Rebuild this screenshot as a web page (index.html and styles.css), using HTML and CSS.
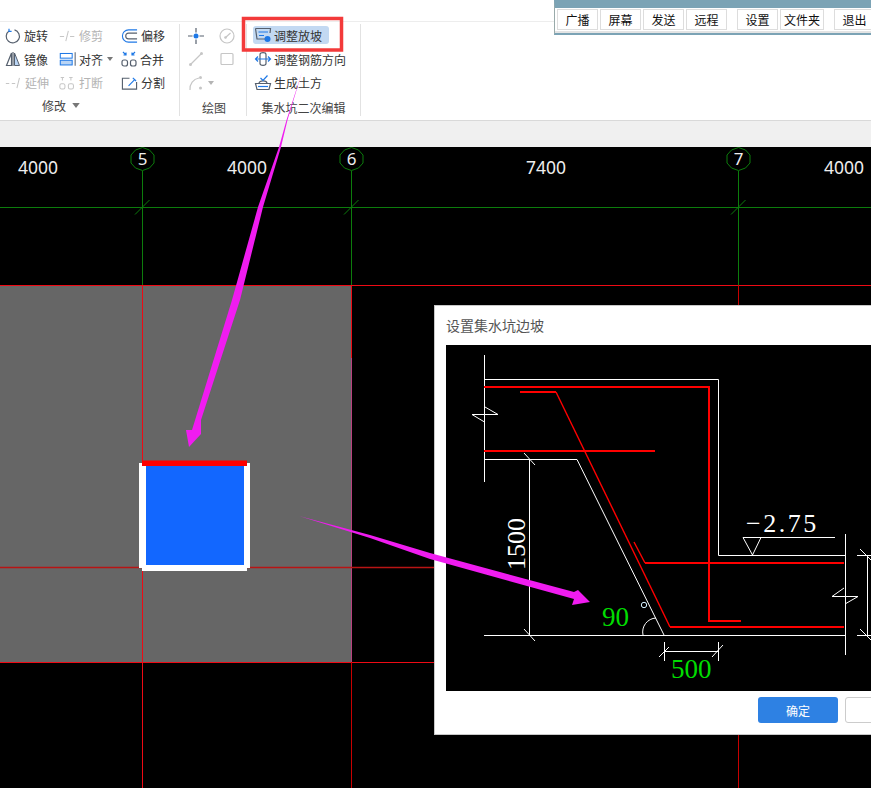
FILE: index.html
```html
<!DOCTYPE html>
<html lang="zh-CN">
<head>
<meta charset="utf-8">
<title>设置集水坑边坡</title>
<link rel="stylesheet" href="styles.css">
</head>
<body>
<div class="app">
  <div class="topbar"></div>
  <div class="ribbon">
    <section class="group group-modify">
      <div class="cmds cmds-modify">
        <div class="cmd"><svg class="ic" viewBox="0 0 16 16"><path class="s-dark" d="M9.500 1.900A6.600 6.600 0 1 1 4 2.900"/><path class="s-blue" d="M4 .8V3.400H6.600"/></svg><span>旋转</span></div>
        <div class="cmd off"><svg class="ic ic-w" viewBox="0 0 20 16"><path class="s-off" d="M1 8.500H6M9 8.500H10M13 8.500H18M11 2L8 14"/></svg><span>修剪</span></div>
        <div class="cmd"><svg class="ic ic-w" viewBox="0 0 18 16"><path class="s-blue" d="M17 1.500H8a6.500 6.500 0 0 0 0 13H17"/><path class="s-dark" d="M17 5H8a3 3 0 0 0 0 6H17"/></svg><span>偏移</span></div>
        <div class="cmd"><svg class="ic" viewBox="0 0 16 16"><path class="s-dark" d="M6.500 2L1.500 14.500H6.500Z"/><path class="f-light" d="M9.500 2L14.500 14.500H9.500Z"/><path class="s-dark" d="M8 1V15"/></svg><span>镜像</span></div>
        <div class="cmd"><svg class="ic ic-w" viewBox="0 0 20 16"><rect class="s-blue" x="1.500" y="1.500" width="14" height="5.500"/><rect class="s-blue f-light" x="1.500" y="9.500" width="14" height="5.500"/><path class="s-dark" d="M19 0V16"/></svg><span>对齐</span><svg class="caret" viewBox="0 0 6 4"><path d="M0 0H6L3 4Z"/></svg></div>
        <div class="cmd"><svg class="ic" viewBox="0 0 16 16"><rect class="s-dark" x="1" y="9" width="5.500" height="6" rx="2"/><rect class="s-dark" x="9.500" y="9" width="5.500" height="6" rx="2"/><path class="s-blue" d="M2 1L5 4M5 1.500V4H2.500M14 1L11 4M11 1.500V4H13.500"/></svg><span>合并</span></div>
        <div class="cmd off"><svg class="ic ic-w" viewBox="0 0 20 16"><path class="s-off" d="M1 8.500H5M8 8.500H12M17 2L14 14"/></svg><span>延伸</span></div>
        <div class="cmd off"><svg class="ic ic-w" viewBox="0 0 20 16"><rect class="s-off" x="1" y="9" width="6" height="6" rx="2"/><rect class="s-off" x="11" y="9" width="6" height="6" rx="2"/><path class="s-off" d="M4 1V5M2 1.500H6M14 1V5M12 1.500H16"/></svg><span>打断</span></div>
        <div class="cmd"><svg class="ic ic-w" viewBox="0 0 18 16"><path class="s-dark" d="M9 3H1.500V14.500H16.500V7"/><path class="s-blue" d="M8 11L15 4M12.500 2.500L16 6"/></svg><span>分割</span></div>
      </div>
      <div class="group-label label-modify">修改<svg class="caret caret-label" viewBox="0 0 6 4"><path d="M0 0H6L3 4Z"/></svg></div>
    </section>

    <section class="group group-draw">
      <div class="cmds cmds-draw">
        <div class="cmd"><svg class="ic" viewBox="0 0 16 16"><path class="s-dark" d="M8 0V4.500M8 11.500V16M0 8H4.500M11.500 8H16"/><circle class="fill-blue" cx="8" cy="8" r="2.500"/></svg></div>
        <div class="cmd off"><svg class="ic" viewBox="0 0 16 16"><circle class="s-off" cx="8" cy="8" r="7"/><path class="s-off" d="M6 10L11.500 5"/><circle class="fill-off" cx="6.500" cy="9.500" r="1.300"/></svg></div>
        <div class="cmd off"><svg class="ic" viewBox="0 0 16 16"><path class="s-off" d="M2.500 13.500L13.500 2.500"/><circle class="fill-off" cx="2.500" cy="13.500" r="1.500"/><circle class="fill-off" cx="13.500" cy="2.500" r="1.500"/></svg></div>
        <div class="cmd off"><svg class="ic" viewBox="0 0 16 16"><rect class="s-off" x="2" y="2.500" width="12" height="11" rx="1"/></svg></div>
        <div class="cmd off cmd-span"><svg class="ic" viewBox="0 0 16 16"><path class="s-off" d="M2 15A11 11 0 0 1 11 3"/><circle class="fill-off" cx="12.500" cy="2.500" r="1.500"/><circle class="fill-off" cx="12.500" cy="13" r="1.500"/></svg><svg class="caret" viewBox="0 0 6 4"><path d="M0 0H6L3 4Z"/></svg></div>
      </div>
      <div class="group-label">绘图</div>
    </section>

    <section class="group group-pit">
      <div class="cmds cmds-pit">
        <div class="cmd active"><svg class="ic" viewBox="0 0 16 16"><path class="s-dark" d="M.5 1.500L2 12H10M.5 1.500H15.500L15 6"/><path class="s-blue" d="M3.500 5H13M4 8.500H9"/><circle class="fill-blue" cx="12.500" cy="12" r="3"/></svg><span>调整放坡</span></div>
        <div class="cmd"><svg class="ic" viewBox="0 0 16 16"><path class="s-dark" d="M5 8V3.500C5 1 11 1 11 3.500V8M5 8V12.500C5 15 11 15 11 12.500V8"/><path class="s-blue" d="M.5 8H15.500M3 5.500L.5 8L3 10.500M13 5.500L15.500 8L13 10.500"/></svg><span>调整钢筋方向</span></div>
        <div class="cmd"><svg class="ic" viewBox="0 0 16 16"><path class="s-dark" d="M.5 8.500H15.500L14 14.500H2ZM4 8.500C4 5 12 5 12 8.500"/><path class="s-blue" d="M5.500 3L8 5.500L12.500 .5"/><path class="s-blue" d="M3 11.500H13"/></svg><span>生成土方</span></div>
      </div>
      <div class="group-label">集水坑二次编辑</div>
    </section>
  </div>
  <div class="strip"></div>

  <main class="canvas">
    <svg class="plan" viewBox="0 147 871 641" width="871" height="641">
      <rect class="slab" x="0" y="285" width="352" height="377"/>
      <g class="grid-green">
        <path d="M0 207.500H871M142.500 171V285M351.500 171V285M738.500 171V285"/>
        <path d="M135 214.500L149.500 200M344 214.500L358.500 200M731 214.500L745.500 200"/>
        <polygon points="142.500,147.500 149.500,150 154,155 154,163 149.500,168 142.500,170.500 135.500,168 131,163 131,155 135.500,150"/>
        <polygon points="351.500,147.500 358.500,150 363,155 363,163 358.500,168 351.500,170.500 344.500,168 340,163 340,155 344.500,150"/>
        <polygon points="738.500,147.500 745.500,150 750,155 750,163 745.500,168 738.500,170.500 731.500,168 727,163 727,155 731.500,150"/>
      </g>
      <g class="grid-red">
        <path d="M0 285.500H871M142.500 285V788M351.500 285V358M0 662.500H434"/>
      </g>
      <path class="grid-deep" d="M351.500 662V788M738.500 285V788"/>
      <path class="grid-pale" d="M351.500 358V662"/>
      <path class="grid-dim" d="M0 567.500H434"/>
      <text class="dim-text" x="18" y="174">4000</text>
      <text class="dim-text" x="227" y="174">4000</text>
      <text class="dim-text" x="526" y="174">7400</text>
      <text class="dim-text" x="824" y="174">4000</text>
      <text class="axis-text" x="142.500" y="165">5</text>
      <text class="axis-text" x="351.500" y="165">6</text>
      <text class="axis-text" x="738.500" y="165">7</text>
      <rect class="pit-blue" x="146" y="466" width="98" height="99"/>
      <path class="pit-white" d="M139 463H146V568H139ZM142 565H247V571H142ZM244 463H250V568H244Z"/>
      <rect class="pit-red" x="142" y="460.500" width="105" height="5.500"/>
    </svg>

    <div class="dialog">
      <div class="dialog-title">设置集水坑边坡</div>
      <svg class="dialog-image" viewBox="446 345 425 346" width="425" height="346">
        <g class="w">
          <path d="M484.500 355V482"/>
          <path d="M484 379.500H718.500V555.500H845"/>
          <path d="M472 414.500H498L485 407M472 414.500L484.500 422"/>
          <path d="M484 459.500H577L664 635"/>
          <path d="M484 635.500H845"/>
          <path d="M529.500 459.500V635"/>
          <path d="M524 453L535 465M524 629L535 641"/>
          <path d="M845.500 534V655"/>
          <path d="M743 537.500H835M743 537.500L752.500 555L761 537.500"/>
          <path d="M832 596.500H858L845 604M832 596.500L844 588"/>
          <path d="M867.500 555V635M857 555.500H871M857 635.500H871M860 549L871 560M860 629L871 640"/>
          <path d="M664.500 642V661M718.500 642V661M664 651.500H718M659 657L669 647M712 657L723 645"/>
          <path d="M643 635A14 14 0 0 1 656 618"/>
          <circle class="cyan" cx="644" cy="605" r="2.700"/>
        </g>
        <g class="r r-thick">
          <path d="M484 387H709V621H741"/>
          <path d="M484 451H655"/>
          <path d="M520 392H556"/>
          <path d="M645 563H844"/>
          <path d="M670 627H844"/>
        </g>
        <path class="r-line" d="M634 542L645 563"/>
        <path class="r-line" d="M556 392L670 627"/>
        <text class="cad cad-w cad-rot" transform="translate(525 570) rotate(-90)">1500</text>
        <text class="cad cad-w cad-level" x="746" y="532">−2.75</text>
        <text class="cad cad-g" x="602" y="626">90</text>
        <text class="cad cad-g" x="671" y="678">500</text>
      </svg>
      <div class="dialog-foot">
        <button class="btn btn-primary">确定</button>
        <button class="btn btn-ghost"></button>
      </div>
    </div>
  </main>

  <div class="remote">
    <div class="remote-group">
      <div class="remote-btn">广播</div>
      <div class="remote-btn">屏幕</div>
      <div class="remote-btn">发送</div>
      <div class="remote-btn">远程</div>
    </div>
    <div class="remote-group">
      <div class="remote-btn">设置</div>
      <div class="remote-btn">文件夹</div>
    </div>
    <div class="remote-group">
      <div class="remote-btn">退出</div>
    </div>
  </div>

  <svg class="annot" viewBox="0 0 871 788" width="871" height="788">
    <rect class="annot-box" x="243.500" y="18.500" width="98" height="31.500"/>
    <polygon class="annot-arrow" points="302,72 287.500,120 281,147 263,207 240,300 201,420 201,434 189,447 186,430 192,430 232,300 258,207 279,147 286.500,120"/>
    <polygon class="annot-arrow" points="299,516 370,535 430,553 574,592 578,590 590,602 572,605 574,599 430,559 370,538"/>
  </svg>
</div>
</body>
</html>
```
FILE: styles.css
```css
* { box-sizing: border-box; }
html, body { margin: 0; padding: 0; background: #fff; }
body { font-family: "Noto Sans CJK SC", "Noto Sans", sans-serif; color: #333; font-size: 12px; }

.app { position: relative; width: 871px; height: 788px; overflow: hidden; display: flex; flex-direction: column; }
.topbar { height: 22px; border-bottom: 1px solid #ededed; flex: none; }
.ribbon { height: 99px; flex: none; display: flex; background: #fff; border-bottom: 1px solid #d9d9d9; padding-top: 2px; }
.strip { height: 26px; flex: none; background: #f0f0f0; }

.group { border-right: 1px solid #e2e2e2; height: 92px; display: flex; flex-direction: column; }
.group-modify { width: 180px; padding-left: 5px; }
.group-draw { width: 67px; padding-left: 8px; }
.group-pit { width: 114px; padding-left: 6px; }

.cmds { display: grid; grid-auto-rows: 23.5px; }
.cmds-modify { grid-template-columns: 54px 62px 56px; }
.cmds-draw { grid-template-columns: 31px 24px; }
.cmds-pit { grid-template-columns: 1fr; justify-items: start; padding-left: 2px; }
.cmd { display: flex; align-items: center; gap: 3px; white-space: nowrap; height: 23.5px; }
.cmd-span { grid-column: span 2; }
.cmd.off { color: #b4b4b4; }
.cmd.active { background: #c3d9f2; border-radius: 3px; height: 18px; margin: 2px 0 0 -2px; padding: 0 7px 0 2px; }
.ic { width: 16px; height: 16px; flex: none; overflow: visible; }
.ic-w { width: 17px; }

.s-dark, .s-blue, .s-off { fill: none; stroke-width: 1.200; }
.s-dark { stroke: #56606e; }
.s-blue { stroke: #1e78e6; }
.s-off { stroke: #c6c6c6; }
.f-light { fill: #b9d4f4; stroke: #56606e; stroke-width: 1; }
rect.s-blue.f-light { fill: #b9d4f4; stroke: #1e78e6; stroke-width: 1.200; }
.fill-blue { fill: #1e78e6; }
.fill-off { fill: #c6c6c6; }

.caret { width: 6px; height: 4px; fill: #777; flex: none; margin-left: 1px; }
.cmd.off .caret { fill: #b4b4b4; }
.caret-label { width: 8px; height: 5px; margin-left: 6px; }

.group-label { text-align: center; margin-top: 4px; line-height: 18px; color: #444; padding-right: 6px; }
.label-modify { margin-top: 2px; display: flex; align-items: center; padding: 0 0 0 37px; }

.canvas { position: relative; flex: 1; background: #000; overflow: hidden; }
.plan { display: block; }
.slab { fill: #666; }
.grid-green { fill: none; stroke: #0c7c0c; stroke-width: 1; }
.grid-red { fill: none; stroke: #ee0a14; stroke-width: 1; }
.grid-deep { fill: none; stroke: #c80000; stroke-width: 1; }
.grid-pale { fill: none; stroke: #b8407e; stroke-width: 1; }
.grid-dim { fill: none; stroke: #b81414; stroke-width: 1.300; }
.dim-text { fill: #eee; font-family: "Noto Sans", sans-serif; font-size: 17.500px; }
.axis-text { fill: #eee; font-family: "Noto Sans", sans-serif; font-size: 17px; text-anchor: middle; }
.pit-blue { fill: #1267ff; }
.pit-white { fill: #fff; }
.pit-red { fill: #f00; }

.dialog { position: absolute; left: 434px; top: 158px; width: 470px; height: 430px; background: #fff; border: 1px solid #c8c8c8; padding: 0 11px; display: flex; flex-direction: column; }
.dialog-title { height: 39px; line-height: 39px; color: #555; font-size: 14px; }
.dialog-image { display: block; background: #000; flex: none; }
.dialog-foot { display: flex; gap: 7px; padding: 6px 0 0 312px; }
.btn { width: 80px; height: 26px; border-radius: 3px; font: inherit; padding: 0; font-size: 12px; flex: none; }
.btn-primary { background: #2e81e3; border: 0; color: #fff; }
.btn-ghost { background: #fff; border: 1px solid #ccc; }

.w { fill: none; stroke: #fff; stroke-width: 1; }
.w .cyan { stroke: #d4f0ff; }
.r { fill: none; stroke: #f00; }
.r-thick { stroke-width: 2; }
.r-line { fill: none; stroke: #f00; stroke-width: 1.400; }
.cad { font-family: "Liberation Serif", serif; font-size: 27px; }
.cad-w { fill: #fff; }
.cad-g { fill: #0d0; }
.cad-rot { font-size: 26px; }
.cad-level { letter-spacing: 2.500px; font-size: 26px; }

.remote { position: absolute; left: 554px; top: 0; width: 317px; height: 35px; background: #fff; border-top: 8px solid #7ba3b5; border-bottom: 2px solid #7ba3b5; border-left: 1px solid #9aa; display: flex; gap: 10px; padding: 1px 0 0 2px; box-shadow: inset 0 -2px 0 #e4e4e4; }
.remote-group { display: flex; gap: 2px; }
.remote-btn { min-width: 41px; height: 21px; line-height: 19px; padding: 0 3px; text-align: center; background: #fff; border: 1px solid #ddd; color: #111; font-size: 12px; white-space: nowrap; }

.annot { position: absolute; left: 0; top: 0; pointer-events: none; }
.annot-box { fill: none; stroke: #f33a3a; stroke-width: 3.500; }
.annot-arrow { fill: #f01cf0; }
```
